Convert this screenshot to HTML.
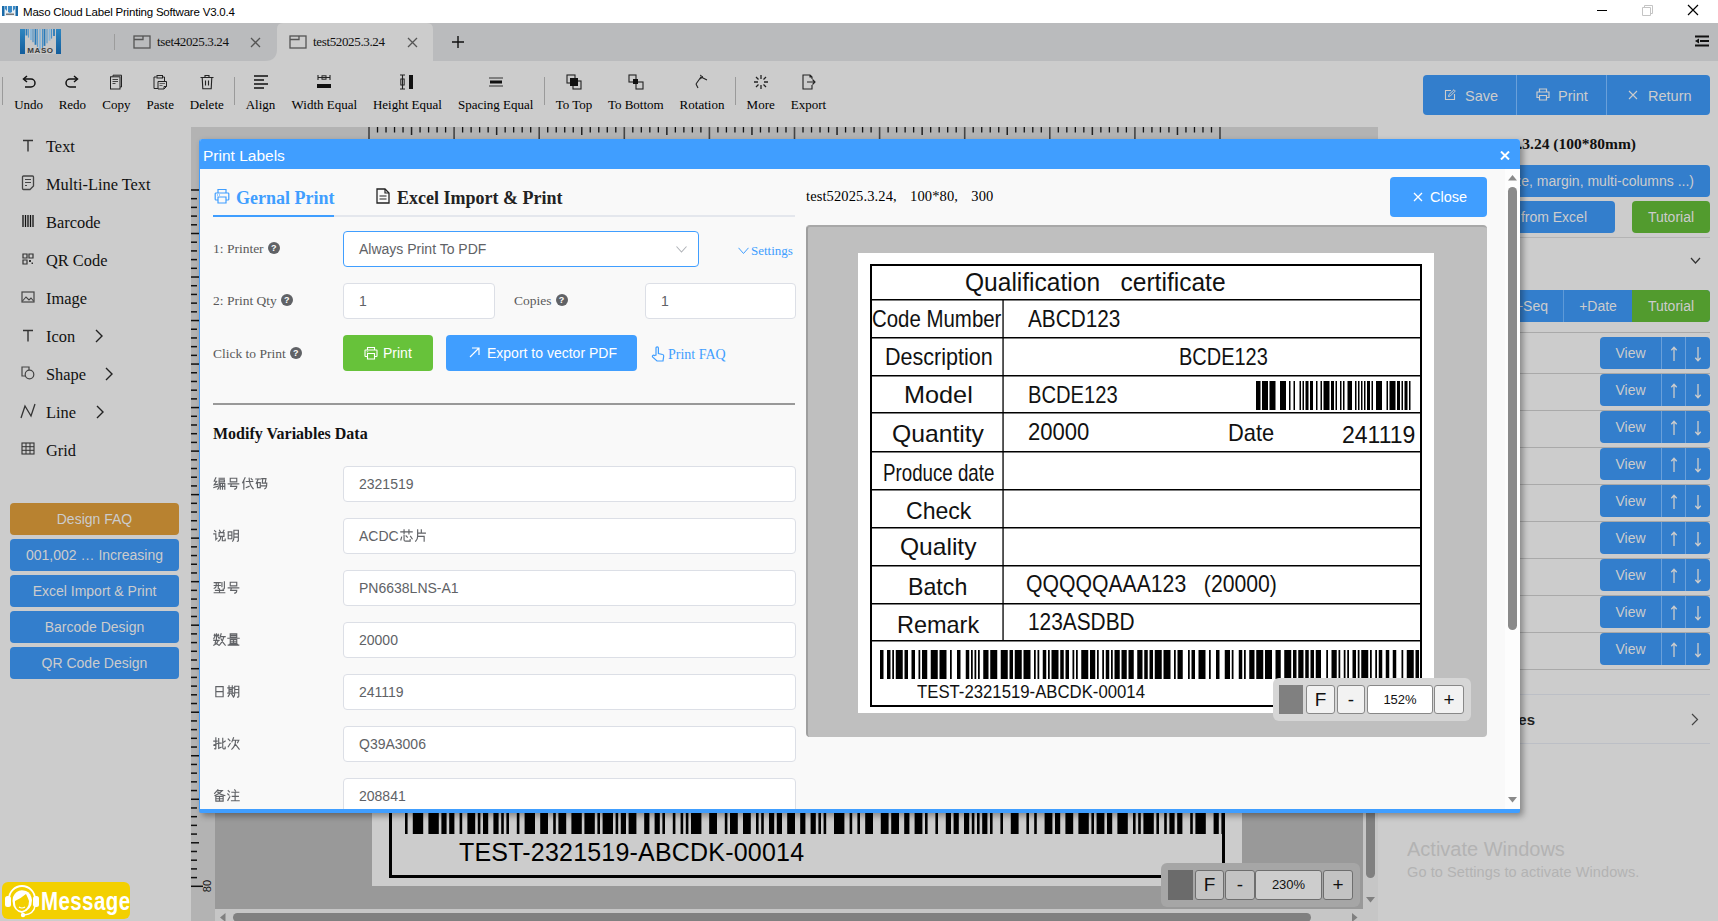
<!DOCTYPE html>
<html><head><meta charset="utf-8">
<style>
*{margin:0;padding:0;box-sizing:border-box}
html,body{width:1718px;height:921px;overflow:hidden;background:#cccccc;font-family:"Liberation Sans",sans-serif}
.a{position:absolute}
.serif{font-family:"Liberation Serif",serif}
svg{display:block}
/* title bar */
#title{left:0;top:0;width:1718px;height:23px;background:#fff}
#tabs{left:0;top:23px;width:1718px;height:38px;background:#babbbd}
#toolbar{left:0;top:61px;width:1718px;height:66px;background:#cccccc}
.tb{position:absolute;top:97px;font:13px "Liberation Serif",serif;color:#000;white-space:nowrap;transform:translateX(-50%)}
.tbi{position:absolute;top:74px;transform:translateX(-50%)}
.sep{position:absolute;width:1px;background:#9a9a9a}
/* left panel */
.mi{position:absolute;left:46px;font:16.4px "Liberation Serif",serif;color:#111;white-space:nowrap}
.mic{position:absolute;left:21px}
.lb{position:absolute;left:10px;width:169px;height:32px;border-radius:4px;background:#337ecc;color:#cccccc;font-size:14px;line-height:32px;text-align:center}
/* canvas */
#ruler-top{left:191px;top:127px;width:1187px;height:12px;background:#b3b3b3}
#ruler-left{left:191px;top:127px;width:24px;height:794px;background:#b3b3b3}
#canvas{left:215px;top:139px;width:1148px;height:770px;background:#999999}
/* right panel */
.rb{position:absolute;background:#337ecc;color:#cccccc;font-size:14px;text-align:center;border-radius:4px}
.hl{position:absolute;height:1px;background:#a9a9a9}
/* modal */
#modal{left:199px;top:139px;width:1321px;height:674px;background:#f9f9f9;border-left:1px solid #409eff;border-bottom:4px solid #409eff;border-radius:3px 3px 2px 2px;box-shadow:3px 3px 6px rgba(0,0,0,.35);overflow:hidden}
#mhead{left:0;top:0;width:1320px;height:30px;background:#409eff}
.lbl{position:absolute;left:13px;font:13.5px "Liberation Serif",serif;color:#5a5a5a;white-space:nowrap}
.inp{position:absolute;background:#fff;border:1px solid #dcdfe6;border-radius:4px;font-size:14px;color:#606266;padding-left:15px;white-space:nowrap}
.q{display:inline-block;width:12px;height:12px;border-radius:50%;background:#606266;color:#fff;font:bold 9px/12px "Liberation Sans",sans-serif;text-align:center;vertical-align:2.5px;margin-left:4px}
.lt{position:absolute;font-family:"Liberation Sans",sans-serif;color:#111;white-space:nowrap}
.zb{position:absolute;top:870px;height:30px;background:#c3c3c3;border:1px solid #6e6e6e;border-radius:3px;text-align:center;line-height:28px;font-size:19px;color:#111}
</style></head><body>

<!-- TITLE BAR -->
<div id="title" class="a">
  <svg class="a" style="left:2px;top:6px" width="16" height="10" viewBox="0 0 16 10"><rect width="16" height="10" fill="#e8eef3"/><rect width="2.5" height="10" fill="#1a6aa8"/><rect x="13.5" width="2.5" height="10" fill="#1a6aa8"/><path d="M3 0V3L5 5V0ZM6 0V6L8 7L10 6V0ZM11 0V5L13 3V0Z" fill="#3a8ac6"/><rect x="4" y="7.5" width="8" height="1.5" fill="#777"/></svg>
  <div class="a" style="left:23px;top:6px;font-size:11.5px;letter-spacing:-0.2px;color:#000;white-space:nowrap">Maso Cloud Label Printing Software V3.0.4</div>
  <div class="a" style="left:1597px;top:10px;width:10px;height:1px;background:#000"></div>
  <svg class="a" style="left:1642px;top:5px" width="11" height="11"><path d="M0.5 2.5H8.5V10.5H0.5Z M2.5 2.5V0.5H10.5V8.5H8.5" fill="none" stroke="#c4c4c4" stroke-width="1"/></svg>
  <svg class="a" style="left:1687px;top:4px" width="12" height="12"><path d="M1 1L11 11M11 1L1 11" stroke="#000" stroke-width="1.2"/></svg>
</div>

<!-- TAB BAR -->
<div id="tabs" class="a">
  <svg class="a" style="left:20px;top:6px" width="41" height="25" viewBox="0 0 41 25">
    <rect x="0" y="0" width="41" height="25" fill="#c8c8c8"/>
    <defs><linearGradient id="lg" x1="0" y1="0" x2="0" y2="1"><stop offset="0" stop-color="#2f86c0"/><stop offset="1" stop-color="#135d9c"/></linearGradient></defs>
    <rect x="0" y="0" width="5" height="25" fill="url(#lg)"/>
    <rect x="36" y="0" width="5" height="25" fill="url(#lg)"/>
    <rect x="5.60" y="0" width="1.8" height="6.5" fill="#2a7ab8"/><rect x="7.90" y="0" width="1.2" height="8.6" fill="#5b9ccc"/><rect x="10.10" y="0" width="1.8" height="11.1" fill="#88b6da"/><rect x="12.40" y="0" width="1.2" height="13.2" fill="#4b90c6"/><rect x="14.60" y="0" width="1.8" height="15.8" fill="#2a7ab8"/><rect x="16.90" y="0" width="1.2" height="17.9" fill="#5b9ccc"/><rect x="19.10" y="0" width="1.8" height="20.5" fill="#88b6da"/><rect x="21.90" y="0" width="1.2" height="18.9" fill="#4b90c6"/><rect x="23.60" y="0" width="1.8" height="16.9" fill="#2a7ab8"/><rect x="26.40" y="0" width="1.2" height="14.3" fill="#5b9ccc"/><rect x="28.60" y="0" width="1.8" height="11.7" fill="#88b6da"/><rect x="30.90" y="0" width="1.2" height="9.6" fill="#4b90c6"/><rect x="33.10" y="0" width="1.8" height="7.0" fill="#2a7ab8"/>
    <text x="20.5" y="24" font-family="Liberation Sans" font-size="8" font-weight="bold" fill="#3c3c3c" text-anchor="middle" letter-spacing="0.6">MASO</text>
  </svg>
  <div class="a" style="left:114px;top:11px;width:1px;height:16px;background:#9c9c9c"></div>
  <svg class="a" style="left:133px;top:12px" width="18" height="14"><rect x="1" y="1" width="16" height="12" fill="none" stroke="#555" stroke-width="1.3"/><path d="M1 4.5H10V1" fill="none" stroke="#555" stroke-width="1.3"/></svg>
  <div class="a serif" style="left:157px;top:11px;font-size:13px;letter-spacing:-0.35px;color:#111;white-space:nowrap">tset42025.3.24</div>
  <svg class="a" style="left:250px;top:14px" width="11" height="11"><path d="M1 1L10 10M10 1L1 10" stroke="#555" stroke-width="1.3"/></svg>
  <svg class="a" style="left:265px;top:0" width="168" height="38"><path d="M0 38 Q12 38 12 26 V6 Q12 0 18 0 H162 Q168 0 168 6 V38Z" fill="#cccccc"/></svg>
  <svg class="a" style="left:289px;top:12px" width="18" height="14"><rect x="1" y="1" width="16" height="12" fill="none" stroke="#555" stroke-width="1.3"/><path d="M1 4.5H10V1" fill="none" stroke="#555" stroke-width="1.3"/></svg>
  <div class="a serif" style="left:313px;top:11px;font-size:13px;letter-spacing:-0.35px;color:#111;white-space:nowrap">test52025.3.24</div>
  <svg class="a" style="left:407px;top:14px" width="11" height="11"><path d="M1 1L10 10M10 1L1 10" stroke="#555" stroke-width="1.3"/></svg>
  <svg class="a" style="left:452px;top:13px" width="12" height="12"><path d="M6 0V12M0 6H12" stroke="#111" stroke-width="1.4"/></svg>
  <svg class="a" style="left:1695px;top:12px" width="14" height="12"><path d="M0 1.5H14M5 6H14M0 10.5H14" stroke="#111" stroke-width="2"/><path d="M0 6L4 3.5V8.5Z" fill="#111"/></svg>
</div>

<!-- TOOLBAR -->
<div id="toolbar" class="a"></div>
<svg class="a" style="left:20.6px;top:74px" width="16" height="16" viewBox="0 0 16 16"><path d="M3 5H10A4 4 0 0 1 10 13H4" fill="none" stroke="#111" stroke-width="1.5"/><path d="M6 2L2.5 5L6 8" fill="none" stroke="#111" stroke-width="1.5"/></svg>
<div class="tb" style="left:28.6px">Undo</div>
<svg class="a" style="left:64.4px;top:74px" width="16" height="16" viewBox="0 0 16 16"><path d="M13 5H6A4 4 0 0 0 6 13H12" fill="none" stroke="#111" stroke-width="1.5"/><path d="M10 2L13.5 5L10 8" fill="none" stroke="#111" stroke-width="1.5"/></svg>
<div class="tb" style="left:72.4px">Redo</div>
<svg class="a" style="left:108.4px;top:74px" width="16" height="16" viewBox="0 0 16 16"><path d="M5 2.5V1.2H13.5V13H12" fill="none" stroke="#222" stroke-width="1"/><rect x="2.5" y="2.8" width="9.5" height="12.2" fill="none" stroke="#222" stroke-width="1"/><path d="M4.5 5.5H10M4.5 7.5H10M4.5 9.5H7.5" stroke="#333" stroke-width="0.9"/></svg>
<div class="tb" style="left:116.4px">Copy</div>
<svg class="a" style="left:152.2px;top:74px" width="16" height="16" viewBox="0 0 16 16"><path d="M4.5 3H2V14.5H6" fill="none" stroke="#222" stroke-width="1"/><path d="M11 3H12.5V7" fill="none" stroke="#222" stroke-width="1"/><rect x="5" y="1.5" width="5.5" height="2.5" fill="none" stroke="#222" stroke-width="1"/><path d="M6 7.5H14.5V12.5L12 15H6Z M12 15V12.5H14.5" fill="none" stroke="#222" stroke-width="1"/><path d="M7.5 9.5H13M7.5 11.5H10.5" stroke="#555" stroke-width="0.9"/></svg>
<div class="tb" style="left:160.2px">Paste</div>
<svg class="a" style="left:198.8px;top:74px" width="16" height="16" viewBox="0 0 16 16"><path d="M1.5 3.5H14.5M6 3.5V1.5H10V3.5M3.2 3.5L3.8 14.8H12.2L12.8 3.5M6.5 6.5V11.5M9.5 6.5V11.5" fill="none" stroke="#222" stroke-width="1.1"/></svg>
<div class="tb" style="left:206.8px">Delete</div>
<svg class="a" style="left:252.5px;top:74px" width="16" height="16" viewBox="0 0 16 16"><path d="M1 2H15M1 6H11M1 10H15M1 14H11" stroke="#111" stroke-width="1.7"/></svg>
<div class="tb" style="left:260.5px">Align</div>
<svg class="a" style="left:316.3px;top:74px" width="16" height="16" viewBox="0 0 16 16"><path d="M2 1V6M14 1V6M2 3.5H14" stroke="#222" stroke-width="1.1"/><rect x="6" y="1.8" width="4" height="3.4" fill="none" stroke="#222" stroke-width="1"/><rect x="1" y="10" width="14" height="4" fill="#111"/></svg>
<div class="tb" style="left:324.3px">Width Equal</div>
<svg class="a" style="left:399.4px;top:74px" width="16" height="16" viewBox="0 0 16 16"><path d="M1 1H6M1 15H6M3.5 1V15" stroke="#222" stroke-width="1.1"/><rect x="1.8" y="5" width="3.4" height="6" fill="none" stroke="#222" stroke-width="1"/><rect x="10" y="1" width="4" height="14" fill="#111"/></svg>
<div class="tb" style="left:407.4px">Height Equal</div>
<svg class="a" style="left:487.7px;top:74px" width="16" height="16" viewBox="0 0 16 16"><path d="M1 4H15M1 12H15" stroke="#333" stroke-width="1.2"/><rect x="2" y="6.5" width="12" height="3" fill="#111"/></svg>
<div class="tb" style="left:495.7px">Spacing Equal</div>
<svg class="a" style="left:566.0px;top:74px" width="16" height="16" viewBox="0 0 16 16"><rect x="1" y="1" width="8" height="8" fill="none" stroke="#222" stroke-width="1.1"/><rect x="7" y="7" width="8" height="8" fill="none" stroke="#222" stroke-width="1.1"/><rect x="4" y="4" width="8" height="8" fill="#111"/></svg>
<div class="tb" style="left:574px">To Top</div>
<svg class="a" style="left:627.8px;top:74px" width="16" height="16" viewBox="0 0 16 16"><rect x="1" y="1" width="7" height="7" fill="none" stroke="#222" stroke-width="1.1"/><rect x="8" y="8" width="7" height="7" fill="none" stroke="#222" stroke-width="1.1"/><rect x="5" y="5" width="5" height="5" fill="#111"/></svg>
<div class="tb" style="left:635.8px">To Bottom</div>
<svg class="a" style="left:694.0px;top:74px" width="16" height="16" viewBox="0 0 16 16"><path d="M2 10L7 3L13 6" fill="none" stroke="#222" stroke-width="1.1"/><path d="M2 10L4 14" stroke="#222" stroke-width="1.1"/><path d="M6 1L9 3L6 5" fill="none" stroke="#222" stroke-width="1"/></svg>
<div class="tb" style="left:702px">Rotation</div>
<svg class="a" style="left:752.7px;top:74px" width="16" height="16" viewBox="0 0 16 16"><path d="M8 1V5M8 11V15M1 8H5M11 8H15M3 3L5.5 5.5M10.5 10.5L13 13M13 3L10.5 5.5M5.5 10.5L3 13" stroke="#222" stroke-width="1.3"/></svg>
<div class="tb" style="left:760.7px">More</div>
<svg class="a" style="left:800.4px;top:74px" width="16" height="16" viewBox="0 0 16 16"><path d="M10 1H3V15H12V11M10 1L12 3V5M10 1V3H12" fill="none" stroke="#222" stroke-width="1.1"/><path d="M7 8H15M12.5 5.5L15 8L12.5 10.5" fill="none" stroke="#222" stroke-width="1.1"/></svg>
<div class="tb" style="left:808.4px">Export</div>
<div class="sep" style="left:2px;top:77px;height:28px"></div>
<div class="sep" style="left:234px;top:77px;height:28px"></div>
<div class="sep" style="left:544px;top:77px;height:28px"></div>
<div class="sep" style="left:735px;top:77px;height:28px"></div>


<!-- LEFT PANEL -->
<svg class="a" style="left:21px;top:139px" width="14" height="13"><path d="M2 1.5H12M7 1.5V12.5" stroke="#333" stroke-width="1.4"/></svg>
<div class="mi" style="top:137px">Text</div>
<svg class="a" style="left:21px;top:175px" width="14" height="16"><path d="M1.5 2A1 1 0 0 1 2.5 1H11.5A1 1 0 0 1 12.5 2V11L9 14.5H2.5A1 1 0 0 1 1.5 13.5Z" fill="none" stroke="#444" stroke-width="1.3"/><path d="M4 4.5H10M4 7.5H10M4 10.5H6" stroke="#444" stroke-width="1.2"/></svg>
<div class="mi" style="top:175px">Multi-Line Text</div>
<svg class="a" style="left:22px;top:215px" width="12" height="12"><path d="M1 0V12M3.5 0V12M6 0V12M8.5 0V12M11 0V12" stroke="#111" stroke-width="1.3"/></svg>
<div class="mi" style="top:213px">Barcode</div>
<svg class="a" style="left:22px;top:253px" width="12" height="12"><path d="M1 1H5V5H1ZM7 1H11V5H7ZM1 7H5V11H1Z" fill="none" stroke="#333" stroke-width="1.2"/><path d="M7 7H9V9H7ZM9.5 9.5H11V11H9.5Z" fill="#333"/></svg>
<div class="mi" style="top:251px">QR Code</div>
<svg class="a" style="left:21px;top:291px" width="14" height="12"><rect x="1" y="1" width="12" height="10" fill="none" stroke="#444" stroke-width="1.2"/><path d="M1.5 10L5 6L8 9L10 7L12.5 10" fill="none" stroke="#444" stroke-width="1.1"/></svg>
<div class="mi" style="top:289px">Image</div>
<svg class="a" style="left:21px;top:329px" width="14" height="13"><path d="M2 1.5H12M7 1.5V12.5" stroke="#333" stroke-width="1.4"/></svg>
<div class="mi" style="top:327px">Icon</div>
<svg class="a" style="left:95px;top:329px" width="8" height="14"><path d="M1 1L7 7L1 13" fill="none" stroke="#222" stroke-width="1.4"/></svg>
<svg class="a" style="left:21px;top:366px" width="14" height="14"><path d="M8 4V1H1V10H4" fill="none" stroke="#444" stroke-width="1.2"/><circle cx="8.5" cy="8.5" r="4.3" fill="none" stroke="#444" stroke-width="1.2"/></svg>
<div class="mi" style="top:365px">Shape</div>
<svg class="a" style="left:105px;top:367px" width="8" height="14"><path d="M1 1L7 7L1 13" fill="none" stroke="#222" stroke-width="1.4"/></svg>
<svg class="a" style="left:20px;top:403px" width="16" height="16"><path d="M1 15L5 3L11 13L15 1" fill="none" stroke="#333" stroke-width="1.3"/></svg>
<div class="mi" style="top:403px">Line</div>
<svg class="a" style="left:96px;top:405px" width="8" height="14"><path d="M1 1L7 7L1 13" fill="none" stroke="#222" stroke-width="1.4"/></svg>
<svg class="a" style="left:21px;top:442px" width="14" height="13"><rect x="1" y="1" width="12" height="11" fill="none" stroke="#333" stroke-width="1.1"/><path d="M1 4.7H13M1 8.3H13M5 1V12M9 1V12" stroke="#333" stroke-width="1"/></svg>
<div class="mi" style="top:441px">Grid</div>
<div class="lb" style="top:503px;background:#b88230">Design FAQ</div>
<div class="lb" style="top:539px">001,002 &hellip; Increasing</div>
<div class="lb" style="top:575px">Excel Import &amp; Print</div>
<div class="lb" style="top:611px">Barcode Design</div>
<div class="lb" style="top:647px">QR Code Design</div>

<!-- CANVAS -->
<div id="ruler-top" class="a"></div>
<div id="ruler-left" class="a"></div>
<div id="canvas" class="a"></div>
<svg class="a" style="left:191px;top:127px" width="1187" height="12"><rect x="177.20" y="0" width="1.6" height="12" fill="#444"/><rect x="185.86" y="0" width="1.3" height="5.5" fill="#111"/><rect x="194.37" y="0" width="1.3" height="5.5" fill="#111"/><rect x="202.88" y="0" width="1.3" height="5.5" fill="#111"/><rect x="211.39" y="0" width="1.3" height="5.5" fill="#111"/><rect x="219.80" y="0" width="1.5" height="8" fill="#222"/><rect x="228.41" y="0" width="1.3" height="5.5" fill="#111"/><rect x="236.92" y="0" width="1.3" height="5.5" fill="#111"/><rect x="245.43" y="0" width="1.3" height="5.5" fill="#111"/><rect x="253.94" y="0" width="1.3" height="5.5" fill="#111"/><rect x="262.30" y="0" width="1.6" height="12" fill="#444"/><rect x="270.96" y="0" width="1.3" height="5.5" fill="#111"/><rect x="279.47" y="0" width="1.3" height="5.5" fill="#111"/><rect x="287.98" y="0" width="1.3" height="5.5" fill="#111"/><rect x="296.49" y="0" width="1.3" height="5.5" fill="#111"/><rect x="304.90" y="0" width="1.5" height="8" fill="#222"/><rect x="313.51" y="0" width="1.3" height="5.5" fill="#111"/><rect x="322.02" y="0" width="1.3" height="5.5" fill="#111"/><rect x="330.53" y="0" width="1.3" height="5.5" fill="#111"/><rect x="339.04" y="0" width="1.3" height="5.5" fill="#111"/><rect x="347.40" y="0" width="1.6" height="12" fill="#444"/><rect x="356.06" y="0" width="1.3" height="5.5" fill="#111"/><rect x="364.57" y="0" width="1.3" height="5.5" fill="#111"/><rect x="373.08" y="0" width="1.3" height="5.5" fill="#111"/><rect x="381.59" y="0" width="1.3" height="5.5" fill="#111"/><rect x="390.00" y="0" width="1.5" height="8" fill="#222"/><rect x="398.61" y="0" width="1.3" height="5.5" fill="#111"/><rect x="407.12" y="0" width="1.3" height="5.5" fill="#111"/><rect x="415.63" y="0" width="1.3" height="5.5" fill="#111"/><rect x="424.14" y="0" width="1.3" height="5.5" fill="#111"/><rect x="432.50" y="0" width="1.6" height="12" fill="#444"/><rect x="441.16" y="0" width="1.3" height="5.5" fill="#111"/><rect x="449.67" y="0" width="1.3" height="5.5" fill="#111"/><rect x="458.18" y="0" width="1.3" height="5.5" fill="#111"/><rect x="466.69" y="0" width="1.3" height="5.5" fill="#111"/><rect x="475.10" y="0" width="1.5" height="8" fill="#222"/><rect x="483.71" y="0" width="1.3" height="5.5" fill="#111"/><rect x="492.22" y="0" width="1.3" height="5.5" fill="#111"/><rect x="500.73" y="0" width="1.3" height="5.5" fill="#111"/><rect x="509.24" y="0" width="1.3" height="5.5" fill="#111"/><rect x="517.60" y="0" width="1.6" height="12" fill="#444"/><rect x="526.26" y="0" width="1.3" height="5.5" fill="#111"/><rect x="534.77" y="0" width="1.3" height="5.5" fill="#111"/><rect x="543.28" y="0" width="1.3" height="5.5" fill="#111"/><rect x="551.79" y="0" width="1.3" height="5.5" fill="#111"/><rect x="560.20" y="0" width="1.5" height="8" fill="#222"/><rect x="568.81" y="0" width="1.3" height="5.5" fill="#111"/><rect x="577.32" y="0" width="1.3" height="5.5" fill="#111"/><rect x="585.83" y="0" width="1.3" height="5.5" fill="#111"/><rect x="594.34" y="0" width="1.3" height="5.5" fill="#111"/><rect x="602.70" y="0" width="1.6" height="12" fill="#444"/><rect x="611.36" y="0" width="1.3" height="5.5" fill="#111"/><rect x="619.87" y="0" width="1.3" height="5.5" fill="#111"/><rect x="628.38" y="0" width="1.3" height="5.5" fill="#111"/><rect x="636.89" y="0" width="1.3" height="5.5" fill="#111"/><rect x="645.30" y="0" width="1.5" height="8" fill="#222"/><rect x="653.91" y="0" width="1.3" height="5.5" fill="#111"/><rect x="662.42" y="0" width="1.3" height="5.5" fill="#111"/><rect x="670.93" y="0" width="1.3" height="5.5" fill="#111"/><rect x="679.44" y="0" width="1.3" height="5.5" fill="#111"/><rect x="687.80" y="0" width="1.6" height="12" fill="#444"/><rect x="696.46" y="0" width="1.3" height="5.5" fill="#111"/><rect x="704.97" y="0" width="1.3" height="5.5" fill="#111"/><rect x="713.48" y="0" width="1.3" height="5.5" fill="#111"/><rect x="721.99" y="0" width="1.3" height="5.5" fill="#111"/><rect x="730.40" y="0" width="1.5" height="8" fill="#222"/><rect x="739.01" y="0" width="1.3" height="5.5" fill="#111"/><rect x="747.52" y="0" width="1.3" height="5.5" fill="#111"/><rect x="756.03" y="0" width="1.3" height="5.5" fill="#111"/><rect x="764.54" y="0" width="1.3" height="5.5" fill="#111"/><rect x="772.90" y="0" width="1.6" height="12" fill="#444"/><rect x="781.56" y="0" width="1.3" height="5.5" fill="#111"/><rect x="790.07" y="0" width="1.3" height="5.5" fill="#111"/><rect x="798.58" y="0" width="1.3" height="5.5" fill="#111"/><rect x="807.09" y="0" width="1.3" height="5.5" fill="#111"/><rect x="815.50" y="0" width="1.5" height="8" fill="#222"/><rect x="824.11" y="0" width="1.3" height="5.5" fill="#111"/><rect x="832.62" y="0" width="1.3" height="5.5" fill="#111"/><rect x="841.13" y="0" width="1.3" height="5.5" fill="#111"/><rect x="849.64" y="0" width="1.3" height="5.5" fill="#111"/><rect x="858.00" y="0" width="1.6" height="12" fill="#444"/><rect x="866.66" y="0" width="1.3" height="5.5" fill="#111"/><rect x="875.17" y="0" width="1.3" height="5.5" fill="#111"/><rect x="883.68" y="0" width="1.3" height="5.5" fill="#111"/><rect x="892.19" y="0" width="1.3" height="5.5" fill="#111"/><rect x="900.60" y="0" width="1.5" height="8" fill="#222"/><rect x="909.21" y="0" width="1.3" height="5.5" fill="#111"/><rect x="917.72" y="0" width="1.3" height="5.5" fill="#111"/><rect x="926.23" y="0" width="1.3" height="5.5" fill="#111"/><rect x="934.74" y="0" width="1.3" height="5.5" fill="#111"/><rect x="943.10" y="0" width="1.6" height="12" fill="#444"/><rect x="951.76" y="0" width="1.3" height="5.5" fill="#111"/><rect x="960.27" y="0" width="1.3" height="5.5" fill="#111"/><rect x="968.78" y="0" width="1.3" height="5.5" fill="#111"/><rect x="977.29" y="0" width="1.3" height="5.5" fill="#111"/><rect x="985.70" y="0" width="1.5" height="8" fill="#222"/><rect x="994.31" y="0" width="1.3" height="5.5" fill="#111"/><rect x="1002.82" y="0" width="1.3" height="5.5" fill="#111"/><rect x="1011.33" y="0" width="1.3" height="5.5" fill="#111"/><rect x="1019.84" y="0" width="1.3" height="5.5" fill="#111"/><rect x="1028.20" y="0" width="1.6" height="12" fill="#444"/></svg>
<svg class="a" style="left:191px;top:139px" width="24" height="770"><rect x="0" y="746.55" width="12" height="1.5" fill="#111"/><rect x="0" y="737.85" width="6" height="1.5" fill="#111"/><rect x="0" y="729.14" width="6" height="1.5" fill="#111"/><rect x="0" y="720.44" width="6" height="1.5" fill="#111"/><rect x="0" y="711.73" width="6" height="1.5" fill="#111"/><rect x="0" y="703.03" width="8" height="1.5" fill="#111"/><rect x="0" y="694.33" width="6" height="1.5" fill="#111"/><rect x="0" y="685.62" width="6" height="1.5" fill="#111"/><rect x="0" y="676.92" width="6" height="1.5" fill="#111"/><rect x="0" y="668.21" width="6" height="1.5" fill="#111"/><rect x="0" y="659.51" width="12" height="1.5" fill="#111"/><rect x="0" y="650.81" width="6" height="1.5" fill="#111"/><rect x="0" y="642.10" width="6" height="1.5" fill="#111"/><rect x="0" y="633.40" width="6" height="1.5" fill="#111"/><rect x="0" y="624.69" width="6" height="1.5" fill="#111"/><rect x="0" y="615.99" width="8" height="1.5" fill="#111"/><rect x="0" y="607.29" width="6" height="1.5" fill="#111"/><rect x="0" y="598.58" width="6" height="1.5" fill="#111"/><rect x="0" y="589.88" width="6" height="1.5" fill="#111"/><rect x="0" y="581.17" width="6" height="1.5" fill="#111"/><rect x="0" y="572.47" width="12" height="1.5" fill="#111"/><rect x="0" y="563.77" width="6" height="1.5" fill="#111"/><rect x="0" y="555.06" width="6" height="1.5" fill="#111"/><rect x="0" y="546.36" width="6" height="1.5" fill="#111"/><rect x="0" y="537.65" width="6" height="1.5" fill="#111"/><rect x="0" y="528.95" width="8" height="1.5" fill="#111"/><rect x="0" y="520.25" width="6" height="1.5" fill="#111"/><rect x="0" y="511.54" width="6" height="1.5" fill="#111"/><rect x="0" y="502.84" width="6" height="1.5" fill="#111"/><rect x="0" y="494.13" width="6" height="1.5" fill="#111"/><rect x="0" y="485.43" width="12" height="1.5" fill="#111"/><rect x="0" y="476.73" width="6" height="1.5" fill="#111"/><rect x="0" y="468.02" width="6" height="1.5" fill="#111"/><rect x="0" y="459.32" width="6" height="1.5" fill="#111"/><rect x="0" y="450.61" width="6" height="1.5" fill="#111"/><rect x="0" y="441.91" width="8" height="1.5" fill="#111"/><rect x="0" y="433.21" width="6" height="1.5" fill="#111"/><rect x="0" y="424.50" width="6" height="1.5" fill="#111"/><rect x="0" y="415.80" width="6" height="1.5" fill="#111"/><rect x="0" y="407.09" width="6" height="1.5" fill="#111"/><rect x="0" y="398.39" width="12" height="1.5" fill="#111"/><rect x="0" y="389.69" width="6" height="1.5" fill="#111"/><rect x="0" y="380.98" width="6" height="1.5" fill="#111"/><rect x="0" y="372.28" width="6" height="1.5" fill="#111"/><rect x="0" y="363.57" width="6" height="1.5" fill="#111"/><rect x="0" y="354.87" width="8" height="1.5" fill="#111"/><rect x="0" y="346.17" width="6" height="1.5" fill="#111"/><rect x="0" y="337.46" width="6" height="1.5" fill="#111"/><rect x="0" y="328.76" width="6" height="1.5" fill="#111"/><rect x="0" y="320.05" width="6" height="1.5" fill="#111"/><rect x="0" y="311.35" width="12" height="1.5" fill="#111"/><rect x="0" y="302.65" width="6" height="1.5" fill="#111"/><rect x="0" y="293.94" width="6" height="1.5" fill="#111"/><rect x="0" y="285.24" width="6" height="1.5" fill="#111"/><rect x="0" y="276.53" width="6" height="1.5" fill="#111"/><rect x="0" y="267.83" width="8" height="1.5" fill="#111"/><rect x="0" y="259.13" width="6" height="1.5" fill="#111"/><rect x="0" y="250.42" width="6" height="1.5" fill="#111"/><rect x="0" y="241.72" width="6" height="1.5" fill="#111"/><rect x="0" y="233.01" width="6" height="1.5" fill="#111"/><rect x="0" y="224.31" width="12" height="1.5" fill="#111"/><rect x="0" y="215.61" width="6" height="1.5" fill="#111"/><rect x="0" y="206.90" width="6" height="1.5" fill="#111"/><rect x="0" y="198.20" width="6" height="1.5" fill="#111"/><rect x="0" y="189.49" width="6" height="1.5" fill="#111"/><rect x="0" y="180.79" width="8" height="1.5" fill="#111"/><rect x="0" y="172.09" width="6" height="1.5" fill="#111"/><rect x="0" y="163.38" width="6" height="1.5" fill="#111"/><rect x="0" y="154.68" width="6" height="1.5" fill="#111"/><rect x="0" y="145.97" width="6" height="1.5" fill="#111"/><rect x="0" y="137.27" width="12" height="1.5" fill="#111"/><rect x="0" y="128.57" width="6" height="1.5" fill="#111"/><rect x="0" y="119.86" width="6" height="1.5" fill="#111"/><rect x="0" y="111.16" width="6" height="1.5" fill="#111"/><rect x="0" y="102.45" width="6" height="1.5" fill="#111"/><rect x="0" y="93.75" width="8" height="1.5" fill="#111"/><rect x="0" y="85.05" width="6" height="1.5" fill="#111"/><rect x="0" y="76.34" width="6" height="1.5" fill="#111"/><rect x="0" y="67.64" width="6" height="1.5" fill="#111"/><rect x="0" y="58.93" width="6" height="1.5" fill="#111"/><rect x="0" y="50.23" width="12" height="1.5" fill="#111"/><text x="0" y="0" transform="translate(21 747) rotate(-90)" font-family="Liberation Sans" font-size="11" fill="#111" text-anchor="middle" dy="-1">80</text></svg>
<div class="a" style="left:372px;top:194px;width:870px;height:692px;background:#cccccc"></div>
<div class="a" style="left:389px;top:200px;width:836px;height:678px;border:3px solid #000;border-top:none"></div>
<svg class="a" style="left:405px;top:780px" width="817" height="54"><path d="M0.00 0h2.60v54h-2.60zM7.80 0h10.40v54h-10.40zM23.40 0h10.40v54h-10.40zM36.40 0h5.20v54h-5.20zM44.20 0h5.20v54h-5.20zM54.60 0h2.60v54h-2.60zM62.40 0h7.80v54h-7.80zM72.80 0h2.60v54h-2.60zM78.00 0h5.20v54h-5.20zM88.40 0h5.20v54h-5.20zM96.20 0h2.60v54h-2.60zM101.40 0h2.60v54h-2.60zM111.80 0h2.60v54h-2.60zM119.60 0h10.40v54h-10.40zM135.20 0h7.80v54h-7.80zM148.20 0h2.60v54h-2.60zM153.40 0h7.80v54h-7.80zM166.40 0h10.40v54h-10.40zM179.40 0h10.40v54h-10.40zM192.40 0h2.60v54h-2.60zM197.60 0h10.40v54h-10.40zM210.60 0h2.60v54h-2.60zM215.80 0h5.20v54h-5.20zM223.60 0h7.80v54h-7.80zM239.20 0h5.20v54h-5.20zM249.60 0h5.20v54h-5.20zM257.40 0h2.60v54h-2.60zM267.80 0h2.60v54h-2.60zM275.60 0h2.60v54h-2.60zM280.80 0h2.60v54h-2.60zM286.00 0h10.40v54h-10.40zM304.20 0h7.80v54h-7.80zM319.80 0h2.60v54h-2.60zM325.00 0h7.80v54h-7.80zM338.00 0h7.80v54h-7.80zM351.00 0h2.60v54h-2.60zM356.20 0h2.60v54h-2.60zM364.00 0h5.20v54h-5.20zM371.80 0h5.20v54h-5.20zM382.20 0h7.80v54h-7.80zM395.20 0h5.20v54h-5.20zM405.60 0h5.20v54h-5.20zM413.40 0h2.60v54h-2.60zM418.60 0h2.60v54h-2.60zM429.00 0h10.40v54h-10.40zM444.60 0h2.60v54h-2.60zM452.40 0h2.60v54h-2.60zM460.20 0h7.80v54h-7.80zM475.80 0h7.80v54h-7.80zM486.20 0h7.80v54h-7.80zM499.20 0h5.20v54h-5.20zM509.60 0h7.80v54h-7.80zM520.00 0h2.60v54h-2.60zM530.40 0h2.60v54h-2.60zM540.80 0h5.20v54h-5.20zM548.60 0h5.20v54h-5.20zM559.00 0h5.20v54h-5.20zM566.80 0h2.60v54h-2.60zM572.00 0h2.60v54h-2.60zM577.20 0h5.20v54h-5.20zM585.00 0h2.60v54h-2.60zM595.40 0h2.60v54h-2.60zM605.80 0h7.80v54h-7.80zM621.40 0h2.60v54h-2.60zM629.20 0h2.60v54h-2.60zM639.60 0h7.80v54h-7.80zM650.00 0h5.20v54h-5.20zM660.40 0h7.80v54h-7.80zM673.40 0h10.40v54h-10.40zM686.40 0h2.60v54h-2.60zM691.60 0h7.80v54h-7.80zM702.00 0h5.20v54h-5.20zM712.40 0h10.40v54h-10.40zM728.00 0h2.60v54h-2.60zM733.20 0h2.60v54h-2.60zM738.40 0h10.40v54h-10.40zM751.40 0h2.60v54h-2.60zM759.20 0h2.60v54h-2.60zM764.40 0h5.20v54h-5.20zM772.20 0h5.20v54h-5.20zM785.20 0h2.60v54h-2.60zM790.40 0h10.40v54h-10.40zM808.60 0h5.20v54h-5.20zM816.40 0h0.60v54h-0.60z" fill="#000"/></svg>
<div class="a" style="left:459px;top:838px;font-size:25px;color:#000;white-space:nowrap;letter-spacing:0.2px">TEST-2321519-ABCDK-00014</div>
<div class="a" style="left:1161px;top:863px;width:199px;height:44px;background:#a6a6a6;border-radius:6px"></div>
<div class="a" style="left:1168px;top:870px;width:25px;height:30px;background:#6b6b6b"></div>
<div class="a zb" style="left:1195px;width:29px">F</div>
<div class="a zb" style="left:1225px;width:30px">-</div>
<div class="a zb" style="left:1255px;width:67px;font-size:13px;background:#cdcdcd">230%</div>
<div class="a zb" style="left:1323px;width:30px">+</div>
<div class="a" style="left:1363px;top:139px;width:15px;height:770px;background:#c6c6c6"></div>
<div class="a" style="left:1366px;top:600px;width:9px;height:278px;background:#808080;border-radius:4.5px"></div>
<svg class="a" style="left:1366px;top:897px" width="10" height="6"><path d="M0 0H9L4.5 5.5Z" fill="#808080"/></svg>
<div class="a" style="left:215px;top:909px;width:1163px;height:12px;background:#c6c6c6"></div>
<div class="a" style="left:233px;top:913px;width:1078px;height:9px;background:#808080;border-radius:4.5px"></div>
<svg class="a" style="left:220px;top:913px" width="6" height="9"><path d="M5.5 0V9L0 4.5Z" fill="#808080"/></svg>
<svg class="a" style="left:1352px;top:913px" width="6" height="9"><path d="M0 0V9L5.5 4.5Z" fill="#808080"/></svg>

<!-- RIGHT PANEL -->
<div class="a serif" style="left:1436px;top:135px;width:200px;text-align:right;font-weight:bold;font-size:15.5px;color:#111;white-space:nowrap">test52025.3.24 (100*80mm)</div>
<div class="rb" style="left:1388px;top:165px;width:322px;height:32px;line-height:32px;text-align:right;padding-right:16px">Label settings (size, margin, multi-columns ...)</div>
<div class="rb" style="left:1388px;top:201px;width:227px;height:32px;line-height:32px;text-align:right;padding-right:28px">Import data from Excel</div>
<div class="rb" style="left:1632px;top:201px;width:78px;height:32px;line-height:32px;background:#529b2e">Tutorial</div>
<div class="hl" style="left:1388px;top:237px;width:322px;background:#b4b4b4"></div>
<svg class="a" style="left:1690px;top:257px" width="11" height="8"><path d="M1 1L5.5 6L10 1" fill="none" stroke="#333" stroke-width="1.2"/></svg>
<div class="rb" style="left:1388px;top:290px;width:322px;height:32px;line-height:32px"></div>
<div class="a" style="left:1480px;top:290px;width:83px;height:32px;line-height:32px;font-size:14px;color:#ccc;text-align:right;padding-right:15px">+Seq</div>
<div class="a" style="left:1563px;top:290px;width:1px;height:32px;background:#5e9ad8"></div>
<div class="a" style="left:1564px;top:290px;width:68px;height:32px;line-height:32px;font-size:14px;color:#ccc;text-align:center">+Date</div>
<div class="rb" style="left:1632px;top:290px;width:78px;height:32px;line-height:32px;background:#529b2e;border-radius:0 4px 4px 0">Tutorial</div>
<div class="hl" style="left:1388px;top:332px;width:322px"></div>
<div class="rb" style="left:1600px;top:337px;width:110px;height:32px"><span class="a" style="left:0;width:61px;line-height:32px;text-align:center">View</span><span class="a" style="left:61px;top:0;width:1px;height:32px;background:#6aa0da"></span><svg class="a" style="left:69px;top:9px" width="10" height="16"><path d="M5 1.5V15M2.3 4.3L5 1.3L7.7 4.3" fill="none" stroke="#ccc" stroke-width="1.3"/></svg><span class="a" style="left:85px;top:0;width:1px;height:32px;background:#6aa0da"></span><svg class="a" style="left:93px;top:9px" width="10" height="16"><path d="M5 1V14.5M2.3 11.7L5 14.7L7.7 11.7" fill="none" stroke="#ccc" stroke-width="1.3"/></svg></div>
<div class="hl" style="left:1388px;top:373px;width:322px"></div>
<div class="rb" style="left:1600px;top:374px;width:110px;height:32px"><span class="a" style="left:0;width:61px;line-height:32px;text-align:center">View</span><span class="a" style="left:61px;top:0;width:1px;height:32px;background:#6aa0da"></span><svg class="a" style="left:69px;top:9px" width="10" height="16"><path d="M5 1.5V15M2.3 4.3L5 1.3L7.7 4.3" fill="none" stroke="#ccc" stroke-width="1.3"/></svg><span class="a" style="left:85px;top:0;width:1px;height:32px;background:#6aa0da"></span><svg class="a" style="left:93px;top:9px" width="10" height="16"><path d="M5 1V14.5M2.3 11.7L5 14.7L7.7 11.7" fill="none" stroke="#ccc" stroke-width="1.3"/></svg></div>
<div class="hl" style="left:1388px;top:410px;width:322px"></div>
<div class="rb" style="left:1600px;top:411px;width:110px;height:32px"><span class="a" style="left:0;width:61px;line-height:32px;text-align:center">View</span><span class="a" style="left:61px;top:0;width:1px;height:32px;background:#6aa0da"></span><svg class="a" style="left:69px;top:9px" width="10" height="16"><path d="M5 1.5V15M2.3 4.3L5 1.3L7.7 4.3" fill="none" stroke="#ccc" stroke-width="1.3"/></svg><span class="a" style="left:85px;top:0;width:1px;height:32px;background:#6aa0da"></span><svg class="a" style="left:93px;top:9px" width="10" height="16"><path d="M5 1V14.5M2.3 11.7L5 14.7L7.7 11.7" fill="none" stroke="#ccc" stroke-width="1.3"/></svg></div>
<div class="hl" style="left:1388px;top:447px;width:322px"></div>
<div class="rb" style="left:1600px;top:448px;width:110px;height:32px"><span class="a" style="left:0;width:61px;line-height:32px;text-align:center">View</span><span class="a" style="left:61px;top:0;width:1px;height:32px;background:#6aa0da"></span><svg class="a" style="left:69px;top:9px" width="10" height="16"><path d="M5 1.5V15M2.3 4.3L5 1.3L7.7 4.3" fill="none" stroke="#ccc" stroke-width="1.3"/></svg><span class="a" style="left:85px;top:0;width:1px;height:32px;background:#6aa0da"></span><svg class="a" style="left:93px;top:9px" width="10" height="16"><path d="M5 1V14.5M2.3 11.7L5 14.7L7.7 11.7" fill="none" stroke="#ccc" stroke-width="1.3"/></svg></div>
<div class="hl" style="left:1388px;top:484px;width:322px"></div>
<div class="rb" style="left:1600px;top:485px;width:110px;height:32px"><span class="a" style="left:0;width:61px;line-height:32px;text-align:center">View</span><span class="a" style="left:61px;top:0;width:1px;height:32px;background:#6aa0da"></span><svg class="a" style="left:69px;top:9px" width="10" height="16"><path d="M5 1.5V15M2.3 4.3L5 1.3L7.7 4.3" fill="none" stroke="#ccc" stroke-width="1.3"/></svg><span class="a" style="left:85px;top:0;width:1px;height:32px;background:#6aa0da"></span><svg class="a" style="left:93px;top:9px" width="10" height="16"><path d="M5 1V14.5M2.3 11.7L5 14.7L7.7 11.7" fill="none" stroke="#ccc" stroke-width="1.3"/></svg></div>
<div class="hl" style="left:1388px;top:521px;width:322px"></div>
<div class="rb" style="left:1600px;top:522px;width:110px;height:32px"><span class="a" style="left:0;width:61px;line-height:32px;text-align:center">View</span><span class="a" style="left:61px;top:0;width:1px;height:32px;background:#6aa0da"></span><svg class="a" style="left:69px;top:9px" width="10" height="16"><path d="M5 1.5V15M2.3 4.3L5 1.3L7.7 4.3" fill="none" stroke="#ccc" stroke-width="1.3"/></svg><span class="a" style="left:85px;top:0;width:1px;height:32px;background:#6aa0da"></span><svg class="a" style="left:93px;top:9px" width="10" height="16"><path d="M5 1V14.5M2.3 11.7L5 14.7L7.7 11.7" fill="none" stroke="#ccc" stroke-width="1.3"/></svg></div>
<div class="hl" style="left:1388px;top:558px;width:322px"></div>
<div class="rb" style="left:1600px;top:559px;width:110px;height:32px"><span class="a" style="left:0;width:61px;line-height:32px;text-align:center">View</span><span class="a" style="left:61px;top:0;width:1px;height:32px;background:#6aa0da"></span><svg class="a" style="left:69px;top:9px" width="10" height="16"><path d="M5 1.5V15M2.3 4.3L5 1.3L7.7 4.3" fill="none" stroke="#ccc" stroke-width="1.3"/></svg><span class="a" style="left:85px;top:0;width:1px;height:32px;background:#6aa0da"></span><svg class="a" style="left:93px;top:9px" width="10" height="16"><path d="M5 1V14.5M2.3 11.7L5 14.7L7.7 11.7" fill="none" stroke="#ccc" stroke-width="1.3"/></svg></div>
<div class="hl" style="left:1388px;top:595px;width:322px"></div>
<div class="rb" style="left:1600px;top:596px;width:110px;height:32px"><span class="a" style="left:0;width:61px;line-height:32px;text-align:center">View</span><span class="a" style="left:61px;top:0;width:1px;height:32px;background:#6aa0da"></span><svg class="a" style="left:69px;top:9px" width="10" height="16"><path d="M5 1.5V15M2.3 4.3L5 1.3L7.7 4.3" fill="none" stroke="#ccc" stroke-width="1.3"/></svg><span class="a" style="left:85px;top:0;width:1px;height:32px;background:#6aa0da"></span><svg class="a" style="left:93px;top:9px" width="10" height="16"><path d="M5 1V14.5M2.3 11.7L5 14.7L7.7 11.7" fill="none" stroke="#ccc" stroke-width="1.3"/></svg></div>
<div class="hl" style="left:1388px;top:632px;width:322px"></div>
<div class="rb" style="left:1600px;top:633px;width:110px;height:32px"><span class="a" style="left:0;width:61px;line-height:32px;text-align:center">View</span><span class="a" style="left:61px;top:0;width:1px;height:32px;background:#6aa0da"></span><svg class="a" style="left:69px;top:9px" width="10" height="16"><path d="M5 1.5V15M2.3 4.3L5 1.3L7.7 4.3" fill="none" stroke="#ccc" stroke-width="1.3"/></svg><span class="a" style="left:85px;top:0;width:1px;height:32px;background:#6aa0da"></span><svg class="a" style="left:93px;top:9px" width="10" height="16"><path d="M5 1V14.5M2.3 11.7L5 14.7L7.7 11.7" fill="none" stroke="#ccc" stroke-width="1.3"/></svg></div>
<div class="hl" style="left:1388px;top:669px;width:322px"></div>
<div class="hl" style="left:1388px;top:694px;width:322px;background:#bcbfc6"></div>
<div class="a" style="left:1415px;top:711px;width:120px;text-align:right;font-weight:bold;font-size:15px;color:#222">Templates</div>
<svg class="a" style="left:1691px;top:713px" width="8" height="13"><path d="M1 1L6.5 6.5L1 12" fill="none" stroke="#444" stroke-width="1.2"/></svg>
<div class="hl" style="left:1388px;top:743px;width:322px;background:#bcbfc6"></div>
<div class="a" style="left:1407px;top:838px;font-size:20px;color:#b3b3b3;white-space:nowrap">Activate Windows</div>
<div class="a" style="left:1407px;top:864px;font-size:14.5px;letter-spacing:0.1px;color:#b3b3b3;white-space:nowrap">Go to Settings to activate Windows.</div>
<div class="a" style="left:1423px;top:75px;width:287px;height:40px;background:#337ecc;border-radius:4px"></div>
<div class="a" style="left:1516px;top:75px;width:1px;height:40px;background:#6aa0da"></div>
<div class="a" style="left:1606px;top:75px;width:1px;height:40px;background:#6aa0da"></div>
<svg class="a" style="left:1444px;top:89px" width="12" height="12"><path d="M7 1.5H1.5V10.5H10.5V5" fill="none" stroke="#ccc" stroke-width="1.1"/><path d="M4.5 7.5L5 5.5L10 0.7L11.3 2L6.3 7Z" fill="none" stroke="#ccc" stroke-width="1"/></svg>
<div class="a" style="left:1465px;top:88px;font-size:14.5px;color:#ccc">Save</div>
<svg class="a" style="left:1536px;top:88px" width="14" height="13"><path d="M3.5 4V1H10.5V4M3.5 9.5H1V4H13V9.5H10.5M3.5 7.5H10.5V12H3.5Z" fill="none" stroke="#ccc" stroke-width="1.2"/></svg>
<div class="a" style="left:1558px;top:88px;font-size:14.5px;color:#ccc">Print</div>
<svg class="a" style="left:1628px;top:90px" width="10" height="10"><path d="M1 1L9 9M9 1L1 9" stroke="#ccc" stroke-width="1.1"/></svg>
<div class="a" style="left:1648px;top:88px;font-size:14.5px;color:#ccc">Return</div>

<!-- MESSAGE -->
<div class="a" style="left:2px;top:882px;width:128px;height:37px;background:#f3d000;border-radius:6px"></div>
<svg class="a" style="left:4px;top:884px" width="36" height="34" viewBox="0 0 36 34">
 <path d="M5 15A13 13 0 0 1 31 15" fill="none" stroke="#fff" stroke-width="1.8"/>
 <rect x="1" y="12" width="6" height="11" rx="2.5" fill="#fff"/>
 <rect x="29" y="12" width="6" height="11" rx="2.5" fill="#fff"/>
 <path d="M9 13Q13 4 22 7Q27 9 28 16Q28 26 18 29Q9 27 8.5 17Z" fill="#fff"/>
 <path d="M11 17Q16 15 22 10Q24 14 25 17Q25 25 18 27Q11 26 11 19Z" fill="#f3d000"/>
 <path d="M15 23Q18 25 21 23" fill="none" stroke="#fff" stroke-width="1.2"/>
 <path d="M31 22Q30 30 20 31" fill="none" stroke="#fff" stroke-width="1.5"/>
 <circle cx="19" cy="31" r="2.2" fill="#fff"/>
</svg>
<div class="a" style="left:41px;top:887px;font-size:25px;font-weight:bold;color:#fff;white-space:nowrap;transform:scaleX(0.82);transform-origin:0 0;letter-spacing:0.5px">Message</div>
<!-- MODAL -->
<div id="modal" class="a">
  <div id="mhead" class="a">
  <div class="a" style="left:3px;top:8px;font-size:15.5px;color:#fff;white-space:nowrap">Print Labels</div>
  <svg class="a" style="left:1300px;top:12px" width="10" height="9"><path d="M1 0.5L9 8.5M9 0.5L1 8.5" stroke="#fff" stroke-width="2"/></svg>
</div>
<svg class="a" style="left:14px;top:49px" width="16" height="16" viewBox="0 0 16 16"><path d="M4 5V1.5H12V5M4 12H2A0.8 0.8 0 0 1 1.2 11.2V5.8A0.8 0.8 0 0 1 2 5H14A0.8 0.8 0 0 1 14.8 5.8V11.2A0.8 0.8 0 0 1 14 12H12M4 9H12V15H4Z" fill="none" stroke="#409eff" stroke-width="1.2"/><path d="M3 7H4M5 7H6" stroke="#409eff" stroke-width="1"/></svg>
<div class="a serif" style="left:36px;top:49px;font-size:18px;font-weight:bold;color:#409eff;white-space:nowrap">Gernal Print</div>
<svg class="a" style="left:176px;top:49px" width="14" height="16" viewBox="0 0 14 16"><path d="M1 1H9L13 5V15H1Z" fill="none" stroke="#222" stroke-width="1.3"/><path d="M9 1V5H13M3.5 8H10.5M3.5 11H10.5" fill="none" stroke="#222" stroke-width="1.2"/></svg>
<div class="a serif" style="left:197px;top:49px;font-size:18px;font-weight:bold;color:#222;white-space:nowrap">Excel Import &amp; Print</div>
<div class="a" style="left:13px;top:76px;width:582px;height:2px;background:#e4e7ed"></div>
<div class="a" style="left:13px;top:76px;width:121px;height:2px;background:#409eff"></div>
<div class="lbl" style="left:13px;top:102px">1: Printer<span class="q">?</span></div>
<div class="inp" style="left:143px;top:92px;width:356px;height:36px;line-height:34px;border-color:#409eff">Always Print To PDF</div>
<svg class="a" style="left:476px;top:107px" width="11" height="7"><path d="M0.5 0.5L5.5 6L10.5 0.5" fill="none" stroke="#b0b3b8" stroke-width="1.1"/></svg>
<svg class="a" style="left:538px;top:108px" width="11" height="8"><path d="M0.5 0.8L5.5 6.5L10.5 0.8" fill="none" stroke="#409eff" stroke-width="1"/></svg>
<div class="a serif" style="left:551px;top:104px;font-size:13px;color:#409eff;white-space:nowrap">Settings</div>
<div class="lbl" style="left:13px;top:154px">2: Print Qty<span class="q">?</span></div>
<div class="inp" style="left:143px;top:144px;width:152px;height:36px;line-height:34px">1</div>
<div class="lbl" style="left:314px;top:154px">Copies<span class="q">?</span></div>
<div class="inp" style="left:445px;top:144px;width:151px;height:36px;line-height:34px">1</div>
<div class="lbl" style="left:13px;top:207px">Click to Print<span class="q">?</span></div>
<div class="a" style="left:143px;top:196px;width:90px;height:36px;background:#67c23a;border-radius:4px"></div>
<svg class="a" style="left:164px;top:207px" width="14" height="14" viewBox="0 0 14 14"><path d="M3.5 4V1.5H10.5V4M3.5 10.5H1.5A0.5 0.5 0 0 1 1 10V4.5A0.5 0.5 0 0 1 1.5 4H12.5A0.5 0.5 0 0 1 13 4.5V10A0.5 0.5 0 0 1 12.5 10.5H10.5M3.5 7.5H10.5V13H3.5Z" fill="none" stroke="#fff" stroke-width="1.1"/><path d="M2.8 5.8H4.2" stroke="#fff" stroke-width="0.9"/></svg>
<div class="a" style="left:183px;top:206px;font-size:14px;color:#fff;white-space:nowrap">Print</div>
<div class="a" style="left:246px;top:196px;width:191px;height:36px;background:#409eff;border-radius:4px"></div>
<svg class="a" style="left:269px;top:208px" width="11" height="11"><path d="M1 10L10 1M3 1H10V8" fill="none" stroke="#fff" stroke-width="1.2"/></svg>
<div class="a" style="left:287px;top:206px;font-size:14px;color:#fff;white-space:nowrap">Export to vector PDF</div>
<svg class="a" style="left:451px;top:207px" width="14" height="16" viewBox="0 0 14 16"><path d="M5 9V2A1.2 1.2 0 0 1 7.4 2V7.5L11.5 8.5A1.5 1.5 0 0 1 12.7 10.2L12 15H6L1.5 11A1.2 1.2 0 0 1 3.3 9.5Z" fill="none" stroke="#409eff" stroke-width="1.2"/></svg>
<div class="a serif" style="left:468px;top:208px;font-size:14px;color:#409eff;white-space:nowrap">Print FAQ</div>
<div class="a" style="left:13px;top:264px;width:582px;height:1.5px;background:#999"></div>
<div class="a serif" style="left:13px;top:286px;font-size:16px;font-weight:bold;color:#111;white-space:nowrap">Modify Variables Data</div>
<svg class="a" style="left:13px;top:338px" width="56" height="13" viewBox="0 0 68.92 16"><g fill="none" stroke="#606266" stroke-width="1.42" stroke-linecap="square"><path transform="translate(0.00 0)" d="M3.5 1L1.5 5L4.5 5.5L1.5 9.5L5.5 9 M1 13L5.5 11.5 M7.5 1.5H14 M7.5 3.5H14V6H7.5 M7.5 3.5V10Q7.5 13.5 6 15 M9 8H14.5V15 M9 8V15 M11.7 8V15 M9 11.5H14.5"/><path transform="translate(17.23 0)" d="M4 1.5H12V6H4Z M1.5 8.5H14.5 M5.5 8.5L4.5 11.5H12Q12 15 9.5 15"/><path transform="translate(34.46 0)" d="M5 1L2 7 M3.5 5V15 M6.5 5.5H14.5 M10 1.5Q10.5 10 15 14.5 M12.5 2L14 3.5 M6.5 13L10 11.5"/><path transform="translate(51.69 0)" d="M1 2.5H7 M4 2.5L1.5 8 M3 7H6.5V13H3Z M8.5 2H13.5L12.5 7.5 M9.5 2L9 7.5H14.5Q14.5 14 12 14.5 M8 11H13"/></g></svg>
<div class="inp" style="left:143px;top:327px;width:453px;height:36px;line-height:34px">2321519</div>
<svg class="a" style="left:13px;top:390px" width="28" height="13" viewBox="0 0 34.46 16"><g fill="none" stroke="#606266" stroke-width="1.42" stroke-linecap="square"><path transform="translate(0.00 0)" d="M2 2L3.5 3.5 M1 6H3.5V13L5 11.5 M8 1.5L9 3.5 M13.5 1.5L12.5 3.5 M7.5 4.5H13.5V9H7.5Z M9.5 9Q9.5 14 6.5 15 M11.5 9V14.5H15V12.5"/><path transform="translate(17.23 0)" d="M1.5 3.5H6V12H1.5Z M1.5 7.7H6 M8.5 1.5H14V14.5L12.8 15 M8.5 1.5V10Q8.5 13.5 7 15 M8.5 6H14 M8.5 10H14"/></g></svg>
<div class="inp" style="left:143px;top:379px;width:453px;height:36px;line-height:34px">ACDC<span style="position:relative;display:inline-block;width:30px;height:13px;vertical-align:-1px"><svg style="position:absolute;left:1px;top:0" width="28" height="13" viewBox="0 0 34.46 16"><g fill="none" stroke="#606266" stroke-width="1.42" stroke-linecap="square"><path transform="translate(0.00 0)" d="M1 3.5H15 M5 1V6 M11 1V6 M2 10L1 13.5 M5 8V13.5Q5 15 7 15H12.5V13 M7.5 8.5L9 10 M13 9L15 12"/><path transform="translate(17.23 0)" d="M4.5 1V9Q4.5 13 2 15 M4.5 5H14 M9 1V5 M4.5 9H12.5V15"/></g></svg></span></div>
<svg class="a" style="left:13px;top:442px" width="28" height="13" viewBox="0 0 34.46 16"><g fill="none" stroke="#606266" stroke-width="1.42" stroke-linecap="square"><path transform="translate(0.00 0)" d="M1.5 2H9 M1.5 5.5H9 M4 2V5.5Q4 8 1.5 9 M6.5 2V9 M11 2V7 M14 1V9Q14 10 12.5 10 M3 11.5H13 M8 9.5V14.5 M1.5 14.5H14.5"/><path transform="translate(17.23 0)" d="M4 1.5H12V6H4Z M1.5 8.5H14.5 M5.5 8.5L4.5 11.5H12Q12 15 9.5 15"/></g></svg>
<div class="inp" style="left:143px;top:431px;width:453px;height:36px;line-height:34px">PN6638LNS-A1</div>
<svg class="a" style="left:13px;top:494px" width="28" height="13" viewBox="0 0 34.46 16"><g fill="none" stroke="#606266" stroke-width="1.42" stroke-linecap="square"><path transform="translate(0.00 0)" d="M1.5 3H7 M4.2 1V8 M2 1.5L3 3.5 M6.5 1.5L5.5 3.5 M2 4.5L1 7 M6 4.5L7.5 6.5 M1 9H7.5 M4 8.5L2.5 12.5Q5 13 7 15 M6.5 9.5Q5 13.5 1 15 M10 1L8.5 6 M9.5 4.5H15 M13.5 4.5Q12 11 8 15 M10 7.5Q12 12 15 15"/><path transform="translate(17.23 0)" d="M4 1H12V5H4Z M4 3H12 M1 6.5H15 M4 8H12V12.5H4Z M4 10.2H12 M8 8V15 M3 13.8H13 M1.5 15H14.5"/></g></svg>
<div class="inp" style="left:143px;top:483px;width:453px;height:36px;line-height:34px">20000</div>
<svg class="a" style="left:13px;top:546px" width="28" height="13" viewBox="0 0 34.46 16"><g fill="none" stroke="#606266" stroke-width="1.42" stroke-linecap="square"><path transform="translate(0.00 0)" d="M3.5 2H12.5V14.5H3.5Z M3.5 8.2H12.5"/><path transform="translate(17.23 0)" d="M1 3.5H8 M2.5 1V10 M6.5 1V10 M2.5 5.5H6.5 M2.5 7.5H6.5 M1 10H8 M3 11.5L1.5 14 M6 11.5L7.5 14 M9.5 1.5H14.5V14Q14.5 15 13 15 M9.5 1.5V10Q9.5 13 8 15 M9.5 5.5H14.5 M9.5 9.5H14.5"/></g></svg>
<div class="inp" style="left:143px;top:535px;width:453px;height:36px;line-height:34px">241119</div>
<svg class="a" style="left:13px;top:598px" width="28" height="13" viewBox="0 0 34.46 16"><g fill="none" stroke="#606266" stroke-width="1.42" stroke-linecap="square"><path transform="translate(0.00 0)" d="M1 5H5 M3.5 1V14Q3.5 15 2 14.5 M1 10L5.5 8 M7 2V14L10 12.5 M7 7.5H10 M12 1.5V13Q12 15 15 14.5V12.5 M12 7L15 5"/><path transform="translate(17.23 0)" d="M1.5 2.5L3.5 4.5 M1.5 12L4 8 M8 1L6 6 M7 4H14.5L13 7 M10.5 4Q10.5 11 6 15 M10.5 9L15 15"/></g></svg>
<div class="inp" style="left:143px;top:587px;width:453px;height:36px;line-height:34px">Q39A3006</div>
<svg class="a" style="left:13px;top:650px" width="28" height="13" viewBox="0 0 34.46 16"><g fill="none" stroke="#606266" stroke-width="1.42" stroke-linecap="square"><path transform="translate(0.00 0)" d="M6 1L2 5.5 M5.5 2H11.5Q8 6 2.5 8 M6 4Q9 7 14.5 8 M3.5 9H12.5V15H3.5Z M8 9V15 M3.5 12H12.5"/><path transform="translate(17.23 0)" d="M1.5 2L3 3.5 M1 6L2.5 7.5 M1 14L3.5 9.5 M9.5 1L10.5 2.5 M6 4H14.5 M6.5 9H14 M10 4V14.5 M5.5 14.5H15"/></g></svg>
<div class="inp" style="left:143px;top:639px;width:453px;height:36px;line-height:34px">208841</div>
<div class="a serif" style="left:606px;top:49px;font-size:14.5px;letter-spacing:0.12px;color:#000;white-space:nowrap">test52025.3.24<span style="display:inline-block;width:17px">,</span>100*80<span style="display:inline-block;width:17px">,</span>300</div>
<div class="a" style="left:1190px;top:38px;width:97px;height:40px;background:#409eff;border-radius:4px"></div>
<svg class="a" style="left:1213px;top:53px" width="10" height="10"><path d="M1 1L9 9M9 1L1 9" stroke="#fff" stroke-width="1.3"/></svg>
<div class="a" style="left:1230px;top:50px;font-size:14.5px;color:#fff;white-space:nowrap">Close</div>
<div class="a" style="left:606px;top:86px;width:681px;height:512px;background:#bfbfbf;border-radius:4px;border-left:2px solid #9e9e9e;border-top:2px solid #a8a8a8"></div>
<div class="a" style="left:658px;top:114px;width:576px;height:460px;background:#fff"></div>
<svg class="a" style="left:670px;top:125px" width="552" height="443"><rect x="1" y="1" width="550" height="441" fill="none" stroke="#000" stroke-width="2"/><rect x="0" y="35" width="552" height="1.5" fill="#000"/><rect x="0" y="73" width="552" height="1.5" fill="#000"/><rect x="0" y="111" width="552" height="1.5" fill="#000"/><rect x="0" y="148" width="552" height="1.5" fill="#000"/><rect x="0" y="187" width="552" height="1.5" fill="#000"/><rect x="0" y="225" width="552" height="1.5" fill="#000"/><rect x="0" y="263" width="552" height="1.5" fill="#000"/><rect x="0" y="301" width="552" height="1.5" fill="#000"/><rect x="0" y="339" width="552" height="1.5" fill="#000"/><rect x="0" y="376" width="552" height="1.5" fill="#000"/><rect x="132.4" y="35" width="1.3" height="341.7" fill="#000"/></svg>
<svg class="a" style="left:1056px;top:242px" width="155" height="29"><path d="M0.00 0h4.50v29h-4.50zM6.00 0h6.00v29h-6.00zM13.50 0h6.00v29h-6.00zM24.00 0h6.00v29h-6.00zM33.00 0h1.50v29h-1.50zM37.50 0h1.50v29h-1.50zM43.50 0h1.50v29h-1.50zM46.50 0h1.50v29h-1.50zM49.50 0h3.00v29h-3.00zM54.00 0h3.00v29h-3.00zM60.00 0h1.50v29h-1.50zM64.50 0h1.50v29h-1.50zM67.50 0h6.00v29h-6.00zM75.00 0h3.00v29h-3.00zM79.50 0h1.50v29h-1.50zM84.00 0h1.50v29h-1.50zM87.00 0h1.50v29h-1.50zM91.50 0h4.50v29h-4.50zM99.00 0h1.50v29h-1.50zM102.00 0h1.50v29h-1.50zM105.00 0h1.50v29h-1.50zM108.00 0h1.50v29h-1.50zM111.00 0h3.00v29h-3.00zM115.50 0h1.50v29h-1.50zM120.00 0h6.00v29h-6.00zM130.50 0h1.50v29h-1.50zM133.50 0h6.00v29h-6.00zM141.00 0h3.00v29h-3.00zM145.50 0h1.50v29h-1.50zM148.50 0h3.00v29h-3.00zM153.00 0h1.50v29h-1.50z" fill="#000"/></svg>
<svg class="a" style="left:680px;top:511px" width="541" height="29"><path d="M0.00 0h3.50v29h-3.50zM7.00 0h3.50v29h-3.50zM12.25 0h1.75v29h-1.75zM15.75 0h7.00v29h-7.00zM24.50 0h3.50v29h-3.50zM31.50 0h3.50v29h-3.50zM38.50 0h1.75v29h-1.75zM42.00 0h5.25v29h-5.25zM50.75 0h7.00v29h-7.00zM59.50 0h7.00v29h-7.00zM70.00 0h1.75v29h-1.75zM77.00 0h3.50v29h-3.50zM85.75 0h3.50v29h-3.50zM91.00 0h1.75v29h-1.75zM94.50 0h1.75v29h-1.75zM98.00 0h1.75v29h-1.75zM103.25 0h5.25v29h-5.25zM110.25 0h7.00v29h-7.00zM120.75 0h7.00v29h-7.00zM129.50 0h3.50v29h-3.50zM134.75 0h7.00v29h-7.00zM143.50 0h7.00v29h-7.00zM154.00 0h1.75v29h-1.75zM157.50 0h1.75v29h-1.75zM162.75 0h3.50v29h-3.50zM168.00 0h1.75v29h-1.75zM171.50 0h7.00v29h-7.00zM180.25 0h3.50v29h-3.50zM185.50 0h3.50v29h-3.50zM192.50 0h1.75v29h-1.75zM196.00 0h1.75v29h-1.75zM201.25 0h7.00v29h-7.00zM210.00 0h5.25v29h-5.25zM217.00 0h1.75v29h-1.75zM222.25 0h1.75v29h-1.75zM225.75 0h3.50v29h-3.50zM231.00 0h1.75v29h-1.75zM234.50 0h5.25v29h-5.25zM241.50 0h5.25v29h-5.25zM248.50 0h5.25v29h-5.25zM257.25 0h5.25v29h-5.25zM264.25 0h3.50v29h-3.50zM269.50 0h3.50v29h-3.50zM274.75 0h7.00v29h-7.00zM283.50 0h7.00v29h-7.00zM294.00 0h1.75v29h-1.75zM297.50 0h5.25v29h-5.25zM308.00 0h1.75v29h-1.75zM311.50 0h3.50v29h-3.50zM318.50 0h7.00v29h-7.00zM329.00 0h1.75v29h-1.75zM336.00 0h3.50v29h-3.50zM344.75 0h5.25v29h-5.25zM351.75 0h1.75v29h-1.75zM358.75 0h3.50v29h-3.50zM364.00 0h1.75v29h-1.75zM369.25 0h5.25v29h-5.25zM376.25 0h7.00v29h-7.00zM385.00 0h7.00v29h-7.00zM395.50 0h5.25v29h-5.25zM404.25 0h7.00v29h-7.00zM413.00 0h3.50v29h-3.50zM418.25 0h5.25v29h-5.25zM425.25 0h3.50v29h-3.50zM430.50 0h3.50v29h-3.50zM435.75 0h5.25v29h-5.25zM446.25 0h1.75v29h-1.75zM451.50 0h5.25v29h-5.25zM458.50 0h1.75v29h-1.75zM463.75 0h1.75v29h-1.75zM467.25 0h1.75v29h-1.75zM472.50 0h3.50v29h-3.50zM477.75 0h1.75v29h-1.75zM481.25 0h7.00v29h-7.00zM490.00 0h1.75v29h-1.75zM495.25 0h1.75v29h-1.75zM498.75 0h3.50v29h-3.50zM505.75 0h3.50v29h-3.50zM512.75 0h3.50v29h-3.50zM521.50 0h1.75v29h-1.75zM526.75 0h7.00v29h-7.00zM535.50 0h3.50v29h-3.50z" fill="#000"/></svg>
<div class="lt" style="left:764.7px;top:130.0px;font-size:26px;line-height:1;transform:scaleX(0.944);transform-origin:0 0">Qualification&nbsp;&nbsp;&nbsp;certificate</div>
<div class="lt" style="left:672px;top:168.3px;font-size:24px;line-height:1;transform:scaleX(0.851);transform-origin:0 0">Code Mumber</div>
<div class="lt" style="left:828.4000000000001px;top:168.3px;font-size:24px;line-height:1;transform:scaleX(0.865);transform-origin:0 0">ABCD123</div>
<div class="lt" style="left:685px;top:206.0px;font-size:24px;line-height:1;transform:scaleX(0.897);transform-origin:0 0">Description</div>
<div class="lt" style="left:979.3px;top:206.0px;font-size:24px;line-height:1;transform:scaleX(0.832);transform-origin:0 0">BCDE123</div>
<div class="lt" style="left:703.9px;top:243.7px;font-size:24px;line-height:1;transform:scaleX(1.052);transform-origin:0 0">Model</div>
<div class="lt" style="left:828.4000000000001px;top:243.7px;font-size:24px;line-height:1;transform:scaleX(0.841);transform-origin:0 0">BCDE123</div>
<div class="lt" style="left:692.2px;top:283.3px;font-size:24px;line-height:1;transform:scaleX(1.029);transform-origin:0 0">Quantity</div>
<div class="lt" style="left:828.4000000000001px;top:280.6px;font-size:24px;line-height:1;transform:scaleX(0.920);transform-origin:0 0">20000</div>
<div class="lt" style="left:1027.5px;top:281.9px;font-size:24px;line-height:1;transform:scaleX(0.910);transform-origin:0 0">Date</div>
<div class="lt" style="left:1141.5px;top:283.6px;font-size:24px;line-height:1;transform:scaleX(0.959);transform-origin:0 0">241119</div>
<div class="lt" style="left:683px;top:321.7px;font-size:24px;line-height:1;transform:scaleX(0.780);transform-origin:0 0">Produce date</div>
<div class="lt" style="left:705.6px;top:359.5px;font-size:24px;line-height:1;transform:scaleX(0.961);transform-origin:0 0">Check</div>
<div class="lt" style="left:699.7px;top:395.9px;font-size:24px;line-height:1;transform:scaleX(1.024);transform-origin:0 0">Quality</div>
<div class="lt" style="left:708.1px;top:435.7px;font-size:24px;line-height:1;transform:scaleX(0.966);transform-origin:0 0">Batch</div>
<div class="lt" style="left:825.5px;top:432.8px;font-size:24px;line-height:1;transform:scaleX(0.883);transform-origin:0 0">QQQQQAAA123&nbsp;&nbsp;&nbsp;(20000)</div>
<div class="lt" style="left:697.2px;top:473.5px;font-size:24px;line-height:1;transform:scaleX(0.978);transform-origin:0 0">Remark</div>
<div class="lt" style="left:828.4000000000001px;top:470.5px;font-size:24px;line-height:1;transform:scaleX(0.869);transform-origin:0 0">123ASDBD</div>
<div class="lt" style="left:716.5px;top:543.7px;font-size:18px;line-height:1;transform:scaleX(0.930);transform-origin:0 0">TEST-2321519-ABCDK-00014</div>
<div class="a" style="left:1073px;top:539px;width:198px;height:43px;background:#d6d6d6;border-radius:6px"></div>
<div class="a" style="left:1079px;top:546px;width:24px;height:29px;background:#808080"></div>
<div class="a" style="left:1106px;top:546px;width:29px;height:29px;background:#f2f2f2;border:1px solid #888;border-radius:3px;text-align:center;line-height:27px;font-size:19px;color:#111">F</div>
<div class="a" style="left:1137px;top:546px;width:28px;height:29px;background:#f2f2f2;border:1px solid #888;border-radius:3px;text-align:center;line-height:27px;font-size:19px;color:#111">-</div>
<div class="a" style="left:1167px;top:546px;width:66px;height:29px;background:#ffffff;border:1px solid #888;border-radius:3px;text-align:center;line-height:27px;font-size:13px;color:#111">152%</div>
<div class="a" style="left:1234px;top:546px;width:30px;height:29px;background:#f2f2f2;border:1px solid #888;border-radius:3px;text-align:center;line-height:27px;font-size:19px;color:#111">+</div>
<div class="a" style="left:1305px;top:30px;width:15px;height:640px;background:#fdfdfd"></div>
<svg class="a" style="left:1308px;top:36px" width="9" height="6"><path d="M0 5.5H9L4.5 0Z" fill="#8a8a8a"/></svg>
<div class="a" style="left:1308px;top:48px;width:9px;height:443px;background:#8a8a8a;border-radius:4.5px"></div>
<svg class="a" style="left:1308px;top:658px" width="9" height="6"><path d="M0 0H9L4.5 5.5Z" fill="#8a8a8a"/></svg>
</div>

</body></html>
